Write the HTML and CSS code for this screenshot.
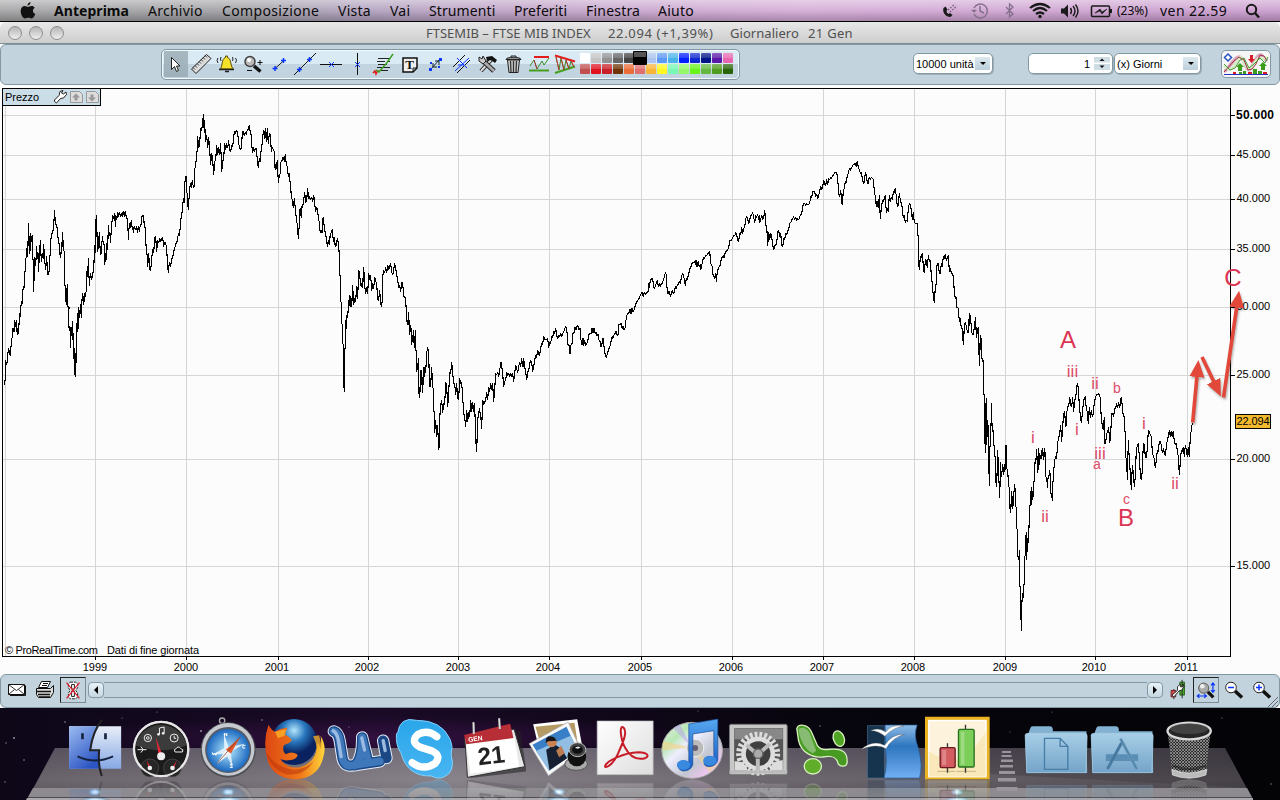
FILE: index.html
```html
<!DOCTYPE html>
<html lang="it">
<head>
  <meta charset="UTF-8">
  <title>FTSEMIB - FTSE MIB INDEX</title>
  <link rel="stylesheet" href="styles.css">
</head>
<body>
  <!-- Menu bar -->
  <div class="menubar">
    <svg class="apple" width="16" height="19" viewBox="0 0 16 19"><path d="M10.500 1c0 2-1.300 3.600-3 3.700C7.400 3 9 1.300 10.500 1zM8 6c.8 0 2-1 3.600-1 1.300 0 2.400.7 3.100 1.700-2.600 1.600-2.200 5.200.6 6.300-.7 2-2.200 4.500-3.700 4.500-1.200 0-1.800-.7-3.300-.7s-2.200.7-3.300.7C3 17.500.7 13.700.7 10.300.7 7 2.600 5.100 4.800 5.100 6.200 5.100 7.200 6 8 6z" fill="#111"/></svg>
    <nav class="menus">
      <b class="m1">Anteprima</b><span class="m2">Archivio</span><span class="m3">Composizione</span><span class="m4">Vista</span><span class="m5">Vai</span><span class="m6">Strumenti</span><span class="m7">Preferiti</span><span class="m8">Finestra</span><span class="m9">Aiuto</span>
    </nav>
    <svg class="status" width="175" height="22" viewBox="939 0 175 22" fill="none" stroke="#1a1a1a">
      <path d="M943.500 8c-1.500 4 2 9 7 9l2-2-2.500-2-1.500 1c-1.500-1-2-2-2-3l1-1.500-2-3z" fill="#1a1a1a" stroke="none"/>
      <path d="M948 10l7-6M950 12l7-6" stroke="#77677a" stroke-width="1.500" stroke-dasharray="1.500 1.500"/>
      <g stroke="#85708c" stroke-width="1.500"><path d="M974 8a7 7 0 1 1 0 6M980 6v5l4 2"/><path d="M971.500 10l2.500 2.500 2.500-2.500z" fill="#85708c" stroke-width=".5"/><path d="M1006 7l7 7-3.500 3V4l3.500 3-7 7" stroke-width="1.300"/></g>
      <path d="M1030 8q10-8 20 0M1033 11q7-6 14 0M1036 14q4-3 8 0" stroke-width="2.200"/><circle cx="1040" cy="16.500" r="1.700" fill="#1a1a1a" stroke="none"/>
      <path d="M1061 8.500h3l4-4v13l-4-4h-3z" fill="#1a1a1a" stroke="none"/><path d="M1070.500 8q2 3 0 6M1073 6q4 5 0 10M1075.500 4.500q5 6.500 0 13" stroke-width="1.400"/>
      <rect x="1091.500" y="6" width="18" height="10.500" rx="1" stroke-width="1.500"/><path d="M1111 9v4" stroke-width="2"/><path d="M1095 13l5-4 2 3 5-3-5 5-2-3z" fill="#1a1a1a" stroke-width=".6"/>
    </svg>
    <span class="battery">(23%)</span>
    <span class="clock">ven 22.59</span>
    <svg width="16" height="16" viewBox="0 0 16 16" fill="none" stroke="#1a1a1a"><circle cx="6.500" cy="6.500" r="4.700" stroke-width="2"/><path d="M10 10l4 4.500" stroke-width="2.500"/></svg>
  </div>

  <!-- Window title -->
  <div class="titlebar">
    <div class="lights"><i></i><i></i><i></i></div>
    <span class="t1">FTSEMIB – FTSE MIB INDEX</span><span class="t2">22.094 (+1,39%)</span><span class="t3">Giornaliero</span><span class="t4">21 Gen</span>
  </div>

  <!-- Drawing tools -->
  <div class="toolbar">
    <div class="tools">
      <svg class="tool active" viewBox="0 0 26 28"><path d="M9.500 7.500v12l3-3 2 5 2-1-2-4.500h3.500z" fill="#fff" stroke="#222"/></svg>
      <svg class="tool" viewBox="0 0 26 28"><path d="M3.500 19L18.500 4.500l4.500 4L8 23.500z" fill="#ddd" stroke="#222"/><path d="M5 17.500l2 2M7 15.500l2 2M9 13.500l2 2M11 11.500l2 2M13 9.500l2 2M15 7.500l2 2M17 5.500l2 2" stroke="#333"/></svg>
      <svg class="tool" viewBox="0 0 26 28"><path d="M6 19c3-2 1-10 5.500-11.500V6h2v1.500C18 9 16 17 19.500 19z" fill="#f5e02a" stroke="#5b4c06"/><path d="M5 19.500h15M11 21.500h4" stroke="#222" stroke-width="1.500"/><path d="M4 8q-2 2 0 5M7 7q-1 2 0 4M21.500 8q2 2 0 5M18.500 7q1 2 0 4" fill="none" stroke="#222"/></svg>
      <svg class="tool" viewBox="0 0 26 28"><path d="M14 16l6.500 5.500" stroke="#111" stroke-width="3.500"/><circle cx="10" cy="11.500" r="5" fill="#bbb" stroke="#444" stroke-width="1.500"/><circle cx="9" cy="10" r="2" fill="#fff"/><path d="M17.500 12.500h5M20 10v5M7 20.500h5" stroke="#111"/></svg>
      <svg class="tool" viewBox="0 0 26 28"><path d="M9 18.500l9-8" stroke="#222"/><path d="M6.500 18.500h5M9 16v5M15 10.500h5M17.500 8v5" stroke="#0a35ff" stroke-width="1.500"/></svg>
      <svg class="tool" viewBox="0 0 26 28"><path d="M2 25L24 3" stroke="#111"/><path d="M5 19.500h5M7.500 17v5M15 9.500h5M17.500 7v5" stroke="#0a35ff" stroke-width="1.500"/></svg>
      <svg class="tool" viewBox="0 0 26 28"><path d="M2 14.500h22" stroke="#111"/><path d="M11 12l5 5M16 12l-5 5" stroke="#0a35ff"/></svg>
      <svg class="tool" viewBox="0 0 26 28"><path d="M13.500 3v22" stroke="#111"/><path d="M11 12l5 5M16 12l-5 5" stroke="#0a35ff"/></svg>
      <svg class="tool" viewBox="0 0 26 28"><path d="M8 8.500h12M7 11.500h8M17 11.500h3M8 14.500h9M7 17.500h13M10 20.500h8" stroke="#222" stroke-width="1.200"/><path d="M3 23l2-2 1 3 2-4" fill="none" stroke="#e21b1b" stroke-width="1.500"/><path d="M6 20l3 2 5-6 2-2 7-10" fill="none" stroke="#3da01e" stroke-width="1.500"/></svg>
      <svg class="tool" viewBox="0 0 26 28"><path d="M7 8h14v10l-4 4H7z" fill="#eee" stroke="#111" stroke-width="1.500"/><path d="M21 18h-4v4" fill="none" stroke="#111"/><text class="tool-t" x="13.500" y="19">T</text></svg>
      <svg class="tool" viewBox="0 0 26 28"><path d="M9 19L18 9M11 13v4h4M13 11h4v4" fill="none" stroke="#123"/><path d="M7 18h3v3H7zM17 8h3v3h-3zM8 12h2v2H8zM16 16h2v2h-2z" fill="#0a35ff"/></svg>
      <svg class="tool" viewBox="0 0 26 28"><path d="M5 17L17 5M9 23L22 10" stroke="#111"/><path d="M9 8l10 10M7 21L21 8M10 15h6" stroke="#0a35ff"/></svg>
      <svg class="tool" viewBox="0 0 26 28"><path d="M7 21L18 9" stroke="#222" stroke-width="4"/><path d="M7 21L17 10" stroke="#ddd" stroke-width="2"/><path d="M8 10l12 11" stroke="#222" stroke-width="5"/><path d="M8 10l12 11" stroke="#aaa" stroke-width="3"/><path d="M5 7v4l4 3 3-3-3-5-1 3z" fill="#ccc" stroke="#222"/><path d="M12 7l6-1 5 4-2 3-4-3-4 1z" fill="#111"/></svg>
      <svg class="tool" viewBox="0 0 26 28"><path d="M7.500 10h12l-1.500 12.500H9z" fill="#ccc" stroke="#222"/><path d="M10.500 11l.5 11M13.500 11v11M16.500 11L16 22" stroke="#333" stroke-width="1.300"/><path d="M6 9.500c0-3 15-3 15 0z" fill="#999" stroke="#222"/><path d="M11 7V6h5v1" fill="none" stroke="#222"/></svg>
      <svg class="tool" viewBox="0 0 26 28"><path d="M8 7h15" stroke="#e21b1b" stroke-width="2"/><path d="M3 20.500h20" stroke="#46a01e" stroke-width="2"/><path d="M4 16l4-6 3 9 5-8 2 4 5-7" fill="none" stroke="#3d8a26"/><path d="M8 10l3 9" stroke="#a33"/></svg>
      <svg class="tool" viewBox="0 0 26 28"><path d="M3 5.500l20 6" stroke="#e21b1b" stroke-width="2"/><path d="M3 23l20-6.500" stroke="#46a01e" stroke-width="2"/><path d="M4 7l3 13 2-12 3 12 2-10 3 9 2-8 3 6" fill="none" stroke="#3d8a26"/><path d="M4 7l3 13M9 8l3 12M14 10l3 9M19 11l3 6" stroke="#b33"/></svg>
      <svg class="swatches" width="156" height="28" viewBox="0 0 156 28">
        <defs><linearGradient id="gloss" x2="0" y2="1"><stop offset="0" stop-color="#fff" stop-opacity=".3"/><stop offset="1" stop-color="#fff" stop-opacity=".15"/></linearGradient></defs>
        <rect x="2" y="3" width="10" height="10" rx="1" fill="#fff"/><rect x="13" y="3" width="10" height="10" rx="1" fill="#c4c4c4"/><rect x="24" y="3" width="10" height="10" rx="1" fill="#929292"/><rect x="35" y="3" width="10" height="10" rx="1" fill="#666"/><rect x="46" y="3" width="10" height="10" rx="1" fill="#444"/><rect x="68" y="3" width="10" height="10" rx="1" fill="#aac4ee"/><rect x="79" y="3" width="10" height="10" rx="1" fill="#5c98f4"/><rect x="90" y="3" width="10" height="10" rx="1" fill="#4ab4ea"/><rect x="101" y="3" width="10" height="10" rx="1" fill="#0020ff"/><rect x="112" y="3" width="10" height="10" rx="1" fill="#1028d0"/><rect x="123" y="3" width="10" height="10" rx="1" fill="#001488"/><rect x="134" y="3" width="10" height="10" rx="1" fill="#5a18a8"/><rect x="145" y="3" width="10" height="10" rx="1" fill="#e868b0"/>
        <rect x="2" y="14" width="10" height="10" rx="1" fill="#c05050"/><rect x="13" y="14" width="10" height="10" rx="1" fill="#e01420"/><rect x="24" y="14" width="10" height="10" rx="1" fill="#c82028"/><rect x="35" y="14" width="10" height="10" rx="1" fill="#703408"/><rect x="46" y="14" width="10" height="10" rx="1" fill="#ec6c38"/><rect x="57" y="14" width="10" height="10" rx="1" fill="#e07070"/><rect x="68" y="14" width="10" height="10" rx="1" fill="#f8b434"/><rect x="79" y="14" width="10" height="10" rx="1" fill="#fff820"/><rect x="90" y="14" width="10" height="10" rx="1" fill="#78f8b4"/><rect x="101" y="14" width="10" height="10" rx="1" fill="#94f868"/><rect x="112" y="14" width="10" height="10" rx="1" fill="#68f418"/><rect x="123" y="14" width="10" height="10" rx="1" fill="#64b840"/><rect x="134" y="14" width="10" height="10" rx="1" fill="#509c20"/><rect x="145" y="14" width="10" height="10" rx="1" fill="#286408"/>
        <rect x="13" y="3" width="142" height="5" fill="url(#gloss)"/><rect x="2" y="14" width="153" height="5" fill="url(#gloss)"/>
        <rect x="55" y="1" width="14" height="14" rx="1" fill="#000"/><rect x="56" y="2" width="12" height="5" fill="#555"/>
      </svg>
    </div>
    <div class="combo units"><span>10000 unità</span><i class="arrow"></i></div>
    <div class="combo number"><span>1</span><svg width="16" height="13" viewBox="0 0 16 13"><path d="M0 0h16v5.500H0zM0 7h16v6H0z" fill="#cfdde4"/><path d="M5.500 4h5L8 1.500zM5.500 8.500h5L8 11z" fill="#111"/></svg></div>
    <div class="combo period"><span>(x) Giorni</span><i class="arrow"></i></div>
    <div class="indicators">
      <svg width="46" height="24" viewBox="0 0 46 24" fill="none">
        <path d="M1 19c5 0 7-12 15-14 6 0 6 13 10 13s6-16 12-15l6 6" stroke="#d9a9bd" stroke-width="3.500"/>
        <path d="M1 13c5 8 9 4 13-4s5-2 9 5 6 1 10-5 6 0 11-4" stroke="#d4edc4" stroke-width="3"/>
        <path d="M1 20l10-11 5-4 5 3 4 10 4-1 4-5 4-9 4 1 3 5" stroke="#a8284a"/><path d="M1 12l6 6 5-2 5-8 4-2 5 10 5-4 6-6 5 5 3-6" stroke="#4a9a3a"/>
        <path d="M5 2l3.500 3.500L5 9 1.500 5.500z" fill="#fff" stroke="#2753c5" stroke-width="1.500"/><path d="M27 3h3v4h2l-3.500 4L25 7h2z" fill="#d81b2b"/><path d="M17 11l4 4h-2v4h-4v-4h-2zM40 10l4 4h-2v4h-4v-4h-2z" fill="#3b9d1c"/>
        <path d="M10 22v-2h3v2zM25 22v-2h4v2zM40 22v-2h4v2z" fill="#d81b2b"/><path d="M16 22v-2h3v2zM20 22v-3h3v3zM30 22v-5h4v5zM35 22v-3h4v3z" fill="#3b9d1c"/><path d="M1 22.500h44" stroke="#2430c0"/>
      </svg>
    </div>
  </div>

  <!-- Price chart -->
  <div class="chart">
    <svg class="plot" width="1280" height="589" viewBox="0 85 1280 589">
      <path class="grid" d="M5.500 89v567M95.500 89v567M186.500 89v567M278.500 89v567M368.500 89v567M458.500 89v567M549.500 89v567M641.500 89v567M732.500 89v567M823.500 89v567M914.500 89v567M1005.500 89v567M1095.500 89v567M1187.500 89v567M3 115.500h1227M3 155.500h1227M3 199.500h1227M3 249.500h1227M3 307.500h1227M3 375.500h1227M3 459.500h1227M3 566.500h1227"/>
      <path class="axis" d="M2.500 88.500h1228v568H2.500zM95.500 656v4M186.500 656v4M278.500 656v4M368.500 656v4M458.500 656v4M549.500 656v4M641.500 656v4M732.500 656v4M823.500 656v4M914.500 656v4M1005.500 656v4M1095.500 656v4M1187.500 656v4M1230 115.500h5M1230 155.500h5M1230 199.500h5M1230 249.500h5M1230 307.500h5M1230 375.500h5M1230 459.500h5M1230 566.500h5"/>

      <!-- 1998 - mid 2001 -->
      <polyline class="price" transform="translate(0 100) scale(.33333)" points="13,855 13,843 16,843 16,780 19,795 22,785 25,745 28,765 31,745 31,767 35,715 38,710 39,683 42,695 43,660 46,680 49,660 50,695 53,685 53,706 56,690 59,640 61,650 62,618 66,610 67,572 72,565 74,513 77,513 77,475 81,472 81,445 84,438 85,370 88,430 88,463 91,445 92,400 95,425 98,405 98,480 101,480 101,577 104,470 107,497 110,438 112,478 115,460 115,515 118,475 121,420 124,485 127,460 130,478 131,432 134,480 137,510 140,468 143,525 146,523 149,500 149,472 152,455 152,425 155,400 158,402 161,375 164,330 166,375 170,372 173,400 176,432 179,430 179,460 182,475 185,425 185,462 188,397 190,450 193,455 194,555 197,560 197,600 200,615 200,570 203,552 203,620 207,620 206,685 210,680 211,745 214,680 217,720 217,662 220,720 220,778 223,745 223,800 226,832 226,760 229,790 230,690 233,640 233,697 236,665 236,622 239,655 241,612 244,655 244,600 248,600 248,578 251,615 254,580 256,590 259,570 260,512 263,530 265,475 268,558 271,520 275,540 278,520 281,512 284,435 287,460 287,365 290,345 292,455 295,440 298,397 301,463 304,460 307,408 310,430 314,438 314,496 317,458 320,480 320,430 323,450 325,376 328,408 331,400 331,430 335,375 338,345 341,358 343,340 347,382 347,345 350,360 353,335 356,352 358,335 361,350 364,338 367,350 370,332 373,350 376,332 379,355 383,355 385,420 388,370 391,385 394,360 397,390 400,380 400,400 403,378 406,390 410,378 412,398 415,378 418,395 421,375 424,375 424,355 428,345 431,350 433,382 436,382 437,420 440,462 443,465 443,502 446,460 449,507 452,512 455,478 458,448 461,460 464,412 467,410 470,455 473,420 476,430 479,415 482,424 488,412 491,440 494,425 497,432 500,440 502,488 505,518 508,485 511,502 514,485 517,470 520,465 523,445 526,440 529,425 532,425 535,400 538,408 541,378 544,345 547,335 550,295 553,308 553,275 556,230 559,228 559,275 562,280 562,300 565,330 568,280 571,250 574,265 577,240 580,262 583,258 584,205 587,200 590,155 593,155 593,108 596,145 599,130 602,85 605,92 608,62 611,42 611,85 614,60 614,100 617,88 617,125 620,105 623,145 626,110 629,150 632,195 635,158 638,180 641,225 644,185 647,180 650,135 653,165 656,140 659,165 662,128 665,215 668,185 671,175 674,130 677,150 680,130 683,145 686,120 688,148 692,155 695,135 698,140 701,110 704,92 707,100 710,90 713,98 716,130 720,148 724,145 727,100 730,92 733,108 736,95 739,105 742,88 745,90 748,75 751,100 754,105 757,160 760,142 763,155 766,145 769,145 772,180 775,205 778,175 781,185 784,140 787,130 790,90 793,95 793,118 796,85 799,125 802,85 805,132 808,100 811,105 814,155 817,140 820,150 823,155 823,185 826,210 829,185 832,215 832,180 835,250 838,225 841,220 841,190 844,185 847,180 850,170 853,185 856,162 859,195 862,200 865,230 868,220 868,242 871,245 874,290 877,300 880,325 883,295 886,325 889,355 892,375 895,418 898,370 898,330 901,325 904,355 904,320 908,322 911,300 914,275 917,308 920,300 923,265 926,298 929,290 932,300 935,290 938,305 941,285 944,310 947,335 950,320 955,348 958,370 961,400 964,390 967,400 967,370 970,350 973,385 976,400 979,415 982,440 985,420 988,430"/>
      <!-- mid 2001 - 2004 -->
      <polyline class="price" transform="translate(320 220) scale(.33333)" points="22,82 25,62 28,75 31,40 34,38 37,28 40,65 43,50 46,82 49,75 52,55 55,68 58,105 58,165 61,168 62,245 65,250 65,310 68,315 68,370 71,375 71,485 73,515 73,385 76,385 77,300 80,328 80,285 83,295 86,240 86,270 89,225 92,262 92,228 95,262 98,195 101,255 104,235 107,245 110,197 113,238 116,150 119,165 122,195 125,200 128,175 128,205 131,140 134,195 137,222 140,200 143,222 146,160 149,180 152,165 155,212 158,190 161,208 164,170 167,185 170,190 173,240 176,240 179,210 182,250 185,260 188,225 188,170 191,150 194,160 197,140 200,160 203,135 206,150 209,140 212,130 215,155 218,165 221,150 224,130 227,145 230,165 233,178 236,205 239,195 242,217 245,185 248,190 251,228 257,235 260,300 263,315 266,275 266,315 269,300 269,345 272,315 275,345 275,375 278,345 281,370 281,330 284,385 287,330 287,390 290,395 290,455 293,440 296,415 296,515 299,535 302,450 302,515 305,450 308,520 311,440 311,485 314,440 317,460 320,400 323,380 326,405 329,500 332,498 335,440 338,500 341,510 341,575 344,575 344,640 347,600 350,650 353,615 356,690 359,670 359,600 362,550 365,555 365,540 368,580 371,550 374,555 377,485 380,495 383,560 386,520 389,455 392,460 395,425 398,460 401,490 404,490 407,525 410,490 413,535 416,540 419,475 422,490 425,488 428,530 431,580 434,590 437,622 440,570 443,605 446,575 449,590 452,540 455,575 458,545 461,575 464,550 467,655 470,697 473,600 476,580 479,565 482,600 482,580 485,628 488,540 491,555 497,540 500,515 503,540 506,500 509,515 512,490 515,510 518,490 521,545 524,510 527,460 530,465 533,455 536,472 539,450 543,427 546,445 548,460 551,500 554,485 557,480 560,455 563,468 566,458 569,472 572,458 575,472 578,460 581,485 584,460 587,435 590,445 593,458 596,440 599,425 602,440 605,415 608,440 611,440 611,415 614,440 617,455 620,480 623,455 626,455 629,430 632,422 635,428 638,455 641,440 647,405 650,412 653,390 656,405 659,405 662,385 665,370 668,375 671,347 674,358 680,358 683,355 686,384 689,365 692,370 695,350 698,352 701,335 704,340 707,325 710,345 713,357 716,345 719,350 722,340 725,352 728,340 731,338 734,325 738,320 741,338 744,375 747,375 750,402 753,375 756,372 759,340 762,338 765,320 768,330 771,318 774,318 777,330 780,325 783,360 786,375 789,355 791,378 794,360 797,378 800,370 803,365 806,345 810,340 813,342 816,325 819,338 822,325 825,340 828,338 831,348 834,342 837,360 840,365 843,382 846,370 849,355 852,380 855,400 858,412 861,405 864,395 867,385 870,378 873,365 876,350 879,355 882,345 888,335 891,345 894,345 897,312 900,315 903,310 906,325 909,318 912,330 915,325 918,300 921,285 924,280 927,278 930,268 933,282 936,265 939,275 942,270 945,260 948,250 951,245 954,240 957,235 960,228 963,222 966,218 970,232 973,215 976,225 979,218 985,215 988,190"/>
      <!-- 2005 - 2008 -->
      <polyline class="price" transform="translate(640 140) scale(.33333)" points="27,445 27,430 30,428 33,418 37,415 40,430 43,448 46,438 49,430 52,420 55,440 58,430 61,442 64,430 67,430 70,420 73,412 76,398 79,405 82,460 85,462 88,452 91,470 94,460 97,450 100,462 103,455 106,440 109,445 112,435 115,432 118,425 121,432 124,412 127,402 130,402 133,420 136,437 139,415 142,420 145,405 148,395 151,382 154,378 157,368 163,368 166,360 169,380 169,360 172,380 175,362 178,382 181,372 182,390 185,378 188,362 191,352 194,355 197,345 200,348 203,340 206,340 209,332 212,370 215,375 218,382 218,405 221,405 224,418 227,400 229,425 232,395 235,385 238,378 241,375 244,355 247,352 250,345 253,355 256,335 259,335 262,330 266,325 269,300 272,302 278,295 281,285 284,288 287,278 290,285 293,300 296,305 299,280 302,285 305,262 308,282 311,265 314,262 317,235 320,230 323,235 326,252 329,240 332,225 335,225 338,218 341,230 344,250 347,225 350,232 353,222 356,240 359,225 359,250 362,238 365,225 368,238 371,235 374,210 377,245 380,280 383,275 383,318 386,275 389,300 392,280 395,290 398,315 401,330 404,318 410,312 413,275 416,272 419,290 422,278 425,315 428,322 431,295 434,298 437,280 440,285 443,272 446,270 449,250 452,248 455,240 461,230 464,240 467,232 470,242 473,235 476,240 479,230 482,222 485,222 488,200 491,190 494,190 497,198 500,190 503,195 509,190 512,170 515,172 518,155 524,155 527,170 530,162 533,178 536,165 539,155 542,138 545,150 548,142 551,120 554,132 557,138 560,118 563,135 566,115 569,120 572,112 575,115 578,105 581,105 584,98 590,98 593,115 596,160 599,170 602,150 605,185 607,195 610,150 613,145 616,125 619,130 622,105 625,100 628,85 631,92 634,82 637,80 640,72 643,75 646,68 649,82 652,62 655,85 658,88 661,100 664,95 667,115 670,130 673,128 676,98 679,105 682,130 685,130 688,110 691,118 694,112 700,118 703,155 706,170 709,200 709,185 712,185 715,205 718,165 721,238 724,205 727,182 730,185 733,175 736,165 739,220 742,205 745,215 748,165 751,185 754,170 757,180 760,155 763,158 766,145 769,170 772,200 775,195 778,160 781,180 784,190 787,205 790,235 793,225 796,250 799,240 802,245 805,205 808,190 811,195 814,210 817,240 820,215 823,248 829,252 832,248 832,280 835,290 835,360 838,390 841,350 844,355 847,338 850,380 853,400 856,360 859,360 862,385 865,345 868,365 871,360 874,410 877,430 880,470 883,488 886,440 889,430 889,385 892,372 895,370 898,400 901,400 904,370 907,380 910,350 913,355 916,342 919,362 922,355 925,345 928,395 931,385 934,400 937,400 940,410 943,455 946,475 949,472 949,502 952,502 955,505 958,545 961,535 964,565 967,565 970,615 973,560 976,545 979,560 982,575 985,580 988,520"/>
      <!-- crash and rebound -->
      <polyline class="price" transform="translate(900 260) scale(.33333)" points="206,215 209,158 212,178 215,215 218,225 221,220 224,190 227,170 229,235 232,205 235,230 235,200 238,318 241,225 241,270 244,235 244,285 248,305 250,300 251,405 254,405 254,535 257,578 257,440 260,415 260,555 263,480 266,530 266,620 269,677 269,560 272,560 272,530 275,430 275,490 278,490 281,555 284,560 284,590 287,590 287,660 290,682 293,570 296,640 299,715 302,605 302,655 305,645 308,612 311,645 314,612 317,630 317,555 320,558 320,625 323,630 326,680 329,685 329,740 332,760 335,692 338,748 341,720 341,705 344,672 347,710 347,740 350,745 350,805 353,810 353,885 356,900 359,870 359,980 362,980 362,1060 365,1112 365,1035 368,1000 370,1015 371,975 374,970 374,890 377,885 377,825 380,900 380,815 383,875 386,795 389,805 389,738 392,735 392,692 395,735 395,680 398,720 401,690 401,665 404,665 404,605 407,612 410,568 413,638 416,565 416,630 419,580 422,598 425,570 425,598 428,565 431,600 434,565 437,600 437,650 440,655 443,685 443,655 446,655 449,630 452,660 452,695 455,710 458,723 458,665 461,665 461,635 464,600 467,590 470,595 473,545 476,540 479,510 482,515 482,495 485,545 488,500 491,460 494,455 497,500 500,495 500,460 503,440 506,440 509,410 512,435 515,440 518,412 521,455 524,420 527,415 530,380 533,370 536,400 538,440 541,465 544,490 547,460 550,430 553,412 556,410 559,450 562,455 565,493 568,440 571,475 574,450 577,470 580,460 583,425 586,415 589,405 592,405 595,402 598,402 601,415 604,480 607,495 610,510 613,470 613,550 617,550 620,520 623,518 626,500 629,550 632,525 635,460 638,460 641,470 644,445 647,445 650,430 653,445 656,425 659,445 662,420 664,412 667,440 670,470 673,470 674,515 677,515 677,590 680,600 682,660 685,540 688,600 691,640 694,690 697,615 700,640 703,680 706,650 709,565 712,560 715,550 718,590 721,645 724,660 727,630 730,550 733,555 736,590 739,595 742,565 745,510 748,515 751,525 754,530 757,575 760,590 763,595 766,625 769,600 772,570 775,575 778,545 781,545 784,555 787,580 790,565 793,580 796,588 799,560 802,540 805,530 808,510 811,530 814,512 817,532 820,512 823,545 826,555 829,548 832,575 835,590 838,645 841,605 844,570 847,575 850,560 853,590 856,555 859,570 862,590 865,560 868,592 871,530 874,510 877,488"/>

      <g class="label">
        <text class="strong" x="1236" y="119" textLength="38">50.000</text><text x="1236.500" y="158">45.000</text><text x="1236.500" y="202">40.000</text><text x="1236.500" y="252">35.000</text><text x="1236.500" y="310">30.000</text><text x="1236.500" y="378">25.000</text><text x="1236.500" y="462">20.000</text><text x="1236.500" y="569">15.000</text>
      </g>
      <rect x="1235.500" y="414.500" width="35" height="14" fill="#f3b92f" stroke="#000"/>
      <text class="label" x="1236.500" y="425" textLength="33">22.094</text>
      <g class="label years">
        <text x="95" y="671">1999</text><text x="186" y="671">2000</text><text x="277" y="671">2001</text><text x="367" y="671">2002</text><text x="458" y="671">2003</text><text x="548" y="671">2004</text><text x="640" y="671">2005</text><text x="731" y="671">2006</text><text x="822" y="671">2007</text><text x="913" y="671">2008</text><text x="1005" y="671">2009</text><text x="1094" y="671">2010</text><text x="1186" y="671">2011</text>
      </g>
      <text class="label" x="5" y="654" textLength="93">© ProRealTime.com</text><text class="label" x="107" y="654" textLength="92">Dati di fine giornata</text>

      <!-- Elliott wave labels -->
      <g class="wave">
        <text class="big" x="1068" y="348">A</text><text class="big" x="1126" y="526">B</text><text class="big" x="1233" y="286">C</text>
        <text x="1072.500" y="377">iii</text><text x="1095" y="389">ii</text><text x="1033" y="443">i</text><text x="1077" y="434.500">i</text><text x="1100" y="458.500">iii</text><text x="1045" y="522">ii</text><text x="1175" y="489">ii</text><text x="1144" y="429">i</text>
        <text class="small" x="1117" y="393">b</text><text class="small" x="1097" y="469">a</text><text class="small" x="1126.500" y="504">c</text>
      </g>
      <defs><marker id="head" markerUnits="userSpaceOnUse" markerWidth="17" markerHeight="16" refX="1" refY="8" orient="auto"><path d="M0 .5l17 7.500L0 15.500z" fill="#e2483a"/></marker></defs>
      <g class="arrows"><path d="M1192.700 422.500L1197 376" marker-end="url(#head)"/><path d="M1202 357l12 25" marker-end="url(#head)"/><path d="M1223.500 397.500L1236.800 306.500" marker-end="url(#head)"/></g>
    </svg>
    <div class="pricetab">
      <span>Prezzo</span>
      <svg width="46" height="16" viewBox="0 0 46 16"><path d="M1.500 12.500l2 1.500 4-4.500 3-.5 3-3.500-.5-2.500-2.500 2-2-1L10 1.500 7 2.500 6 6.500 1.500 11z" fill="#fff" stroke="#222"/><path d="M17.500 2.500h9l3 3v8h-12zM33.500 2.500h9l3 3v8h-12z" fill="#ddd" stroke="#999"/><path d="M23 4.500l4 4h-2.500v3h-3v-3H19zM39 12.500l4-4h-2.500v-3h-3v3H35z" fill="#999"/></svg>
    </div>
  </div>

  <!-- Scroll and zoom bar -->
  <div class="bottombar">
    <svg class="ic" viewBox="0 0 26 26"><path d="M4.500 7.500h16v10h-16z" fill="#fff" stroke="#111"/><path d="M4.500 7.500l8 6 8-6M4.500 17.500l6-5M20.500 17.500l-6-5" fill="none" stroke="#333"/><path d="M6 18.500h15.500v-10" fill="none" stroke="#111"/></svg>
    <svg class="ic printer" viewBox="0 0 26 26"><path d="M9.500 4.500h9l-3 6h-9z" fill="#fff" stroke="#111"/><path d="M11 6.500h5M10 8.500h5" stroke="#111"/><path d="M4.500 11.500h14l3-3v7l-3 5h-12l-2-3z" fill="#ddd" stroke="#111"/><path d="M4 14.500h15M6 17.500h12M7 20h11" stroke="#111" stroke-width="1.500"/></svg>
    <svg class="ic boxed" viewBox="0 0 26 26"><path d="M10 4.500h6l2 2v4l-2 3 2 3v4l-2 2h-6l-2-2v-4l2-3-2-3v-4z" fill="#fff" stroke="#111" stroke-dasharray="3 1"/><path d="M11.500 7h3v5h-3zM11.500 14h3v6h-3z" fill="none" stroke="#111"/><path d="M6 5l14 17M20 5L6 22" stroke="#e01b2b" stroke-width="1.300"/></svg>
    <div class="scroll"><button class="left"></button><div class="track"></div><button class="right"></button></div>
    <svg class="ic wrench" viewBox="0 0 26 26"><path d="M15 4.500h5v14h-5z" fill="#4cae2f" stroke="#265c17"/><path d="M17.500 2v20M8.500 12v11" stroke="#222"/><path d="M5.500 13.500h5v7h-5z" fill="#d24848" stroke="#622"/><path d="M6.500 18.500l6-5v-4l3-3v3h3v-3l1 3-3 4h-2l-6 7z" fill="#fff" stroke="#222"/></svg>
    <svg class="ic boxed zoomfit" viewBox="0 0 26 26"><path d="M15 15l6 6" stroke="#111" stroke-width="3.500"/><circle cx="10.500" cy="11" r="5.500" fill="#aaa" stroke="#555"/><circle cx="9" cy="9" r="2.500" fill="#eee"/><path d="M20.500 6v9M18.500 8l2-2.500 2 2.500M18.500 13l2 2.500 2-2.500M4 19.500h9M6 17.500l-2.500 2 2.500 2M11 17.500l2.500 2-2.500 2" fill="none" stroke="#0a35ff" stroke-width="1.300"/></svg>
    <svg class="ic" viewBox="0 0 26 26"><path d="M14 14l7 6.500" stroke="#111" stroke-width="3.500"/><circle cx="10" cy="10.500" r="5.300" fill="#fff" stroke="#222"/><path d="M7 10.500h6" stroke="#0a35ff" stroke-width="1.500"/></svg>
    <svg class="ic last" viewBox="0 0 26 26"><path d="M14 14l7 6.500" stroke="#111" stroke-width="3.500"/><circle cx="10" cy="10.500" r="5.300" fill="#fff" stroke="#222"/><path d="M7 10.500h6M10 7.500v6" stroke="#0a35ff" stroke-width="1.500"/></svg>
    <svg class="grip" width="10" height="10" viewBox="0 0 10 10"><path d="M0 10L10 0M4 10l6-6M8 10l2-2" stroke="#667"/></svg>
  </div>

  <!-- Dock -->
  <div class="dock">
    <svg class="shelf" width="1280" height="92" viewBox="0 0 1280 92">
      <defs>
        <linearGradient id="shelf" x2="0" y2="1"><stop offset="0" stop-color="#625b69"/><stop offset=".6" stop-color="#777079"/><stop offset="1" stop-color="#655f67"/></linearGradient>
        <linearGradient id="shade"><stop offset="0" stop-color="#000" stop-opacity=".12"/><stop offset=".35" stop-color="#fff" stop-opacity=".13"/><stop offset=".65" stop-color="#000" stop-opacity=".1"/><stop offset="1" stop-color="#000" stop-opacity=".32"/></linearGradient>
        <radialGradient id="lamp"><stop offset="0" stop-color="#fff"/><stop offset=".4" stop-color="#c4e8ff"/><stop offset="1" stop-color="#7ab8e8" stop-opacity="0"/></radialGradient>
      </defs>
      <g fill="#958ba8"><circle cx="14" cy="30" r="1"/><circle cx="6" cy="35" r=".7"/><circle cx="24" cy="52" r=".8"/><circle cx="65" cy="14" r=".8"/><circle cx="122" cy="10" r=".6"/><circle cx="157" cy="4" r=".6"/><circle cx="201" cy="23" r="1"/><circle cx="262" cy="12" r=".8"/><circle cx="349" cy="19" r=".6"/><circle cx="503" cy="26" r=".7"/><circle cx="698" cy="3" r=".5"/><circle cx="820" cy="18" r=".7"/><circle cx="1010" cy="24" r=".5"/><circle cx="1052" cy="4" r=".5"/><circle cx="1222" cy="10" r=".6"/><circle cx="1271" cy="76" r=".7"/><circle cx="5" cy="74" r=".7"/></g>
      <path d="M55 40h1170l28 52H27z" fill="url(#shelf)"/><path d="M55 40h1170l28 52H27z" fill="url(#shade)"/>
      <path d="M990 40h235l26 40-261-14z" fill="#000" opacity=".12"/>
      <path d="M33 80h1214l5 9H28z" fill="#8d8b8f"/><path d="M28 89.500h1224" stroke="#4f4b52"/><path d="M27 90h1226v2H26z" fill="#aaa8ac"/>
      <g fill="#99949d"><path d="M1002 43h9v2h-9zM1001.500 47h10v2h-10zM1001 51.500h12v2.500h-12zM1000 57h13v2.500h-13zM999 63h16v3h-16zM998 70h18v3.500h-18zM996.500 79h21v4h-21z"/></g>
      <g fill="url(#lamp)"><ellipse cx="95" cy="84" rx="7" ry="4"/><ellipse cx="228" cy="84" rx="7" ry="4"/><ellipse cx="559" cy="84" rx="7" ry="4"/><ellipse cx="957" cy="84" rx="7" ry="4"/><ellipse cx="95" cy="92" rx="14" ry="3"/><ellipse cx="228" cy="92" rx="14" ry="3"/><ellipse cx="559" cy="92" rx="14" ry="3"/><ellipse cx="957" cy="92" rx="14" ry="3"/></g>
    </svg>
    <div class="apps">
      <!-- Finder -->
      <svg viewBox="0 0 198 213">
        <defs><linearGradient id="fl" x2=".6" y2="1"><stop offset="0" stop-color="#9cbcf0"/><stop offset="1" stop-color="#2c55c4"/></linearGradient><linearGradient id="fr" x2="0" y2="1"><stop offset="0" stop-color="#e8eef8"/><stop offset="1" stop-color="#86a8e4"/></linearGradient></defs>
        <path d="M21 55h156v127H21z" fill="url(#fr)"/><path d="M21 55h90q-20 30-25 71h28q-4 30 0 56H21z" fill="url(#fl)"/>
        <path d="M120 35Q92 68 84 127h27q-4 45 8 77" fill="none" stroke="#222" stroke-width="6"/><path d="M46 145q52 25 107 0" fill="none" stroke="#16233f" stroke-width="6"/><path d="M61 76v18M130 76v18" stroke="#16233f" stroke-width="8"/>
      </svg>
      <!-- Dashboard -->
      <svg viewBox="0 0 198 213">
        <circle cx="99" cy="123" r="85" fill="#e6e6e6"/><circle cx="99" cy="123" r="79" fill="#1a1a1a"/><path d="M22 112a79 79 0 0 1 154 0q-77 30-154 0z" fill="#3b3b3b"/>
        <circle cx="65" cy="180" r="27" fill="#262626" stroke="#555" stroke-width="2"/><circle cx="133" cy="180" r="27" fill="#262626" stroke="#555" stroke-width="2"/><circle cx="99" cy="123" r="81" fill="none" stroke="#e6e6e6" stroke-width="6"/>
        <g fill="none" stroke="#eee" stroke-width="3"><circle cx="59" cy="90" r="11"/><circle cx="59" cy="90" r="4"/><circle cx="138" cy="90" r="12"/><path d="M138 83v8h6M94 78V60l14-3v18M28 125h27M38 116l7 9-7 9M141 132h22q5-8-5-10-8-10-14 0-10 2-3 10z"/></g><circle cx="91" cy="79" r="4" fill="#eee"/><circle cx="105" cy="76" r="4" fill="#eee"/>
        <path d="M83 88l20 54-11 2zM56 157l13 24-7 2zM146 157l-9 27-6-3z" fill="#e32636"/><circle cx="99" cy="145" r="12" fill="#eee"/><circle cx="65" cy="180" r="7" fill="#eee"/><circle cx="133" cy="180" r="7" fill="#eee"/>
      </svg>
      <!-- Safari -->
      <svg viewBox="0 0 198 213">
        <defs><radialGradient id="sa"><stop offset="0" stop-color="#b8ecff"/><stop offset="1" stop-color="#1c69c0"/></radialGradient></defs>
        <circle cx="81" cy="38" r="8" fill="none" stroke="#aaa" stroke-width="4"/><path d="M77 45h9v8h-9z" fill="#888"/><circle cx="99" cy="126" r="83" fill="#4d4f55"/><circle cx="99" cy="124" r="79" fill="#c6c9ce"/><circle cx="99" cy="126" r="69" fill="#555b66"/><circle cx="99" cy="127" r="64" fill="url(#sa)"/>
        <path d="M86 74l14 43 49-10-42 24 5 46-20-40-41 3 36-19z" fill="#e9f6ff" opacity=".85"/><path d="M136 86l-29 51-15-12z" fill="#e45a2b"/><path d="M65 167l27-42 15 12z" fill="#f2f2f2"/><path d="M136 86l-71 81" stroke="#6c3b2c" stroke-width="2"/><g fill="none" stroke="#fff" stroke-width="3"><path d="M88 84v-9l7 9v-9M151 112h-8v8h7M51 133l3 8 4-6 4 7 3-8M113 169h-8l7 9h-8"/></g>
      </svg>
      <!-- Firefox -->
      <svg viewBox="0 0 198 213">
        <defs><radialGradient id="ff" cx=".5" cy=".25"><stop offset="0" stop-color="#b3e6fb"/><stop offset=".5" stop-color="#2876bd"/><stop offset="1" stop-color="#0a2260"/></radialGradient><linearGradient id="fox" x2="1"><stop offset="0" stop-color="#dd4813"/><stop offset=".6" stop-color="#f07a1a"/><stop offset="1" stop-color="#ffd43a"/></linearGradient></defs>
        <circle cx="99" cy="102" r="69" fill="url(#ff)"/>
        <path d="M22 50q8 16 20 21 14-10 37-12-6 11-7 22 16 6 20 17-8 9-24 14-6 16 6 27 16-12 36 1-4 14-22 16-16 4-30-3 20 32 60 24 50-14 52-74l8 18q4-18 0-38 20 30 8 66-14 60-82 65-62-2-82-48-20-60 0-116z" fill="url(#fox)"/>
        <path d="M42 71l33-8-5 20-20 8zM156 85q20 38 0 76l26-45-8-34z" fill="#ffb62a" opacity=".75"/><path d="M14 130q10 50 58 68 55 10 86-39-38 36-82 22-42-14-62-51z" fill="#b8320a" opacity=".5"/>
      </svg>
      <!-- Word -->
      <svg viewBox="0 0 198 213">
        <g fill="none" stroke-linecap="round" stroke-linejoin="round">
          <path id="word" d="M20 70Q34 74 38 100L46 150Q52 178 78 172L158 160M84 172Q106 150 105 88L120 150 122 165M168 98L178 150" stroke="#e4eefa" stroke-width="37"/>
          <path d="M20 70Q34 74 38 100L46 150Q52 178 78 172L158 160M84 172Q106 150 105 88L120 150 122 165M168 98L178 150" stroke="#1b4785" stroke-width="31"/>
          <path d="M20 70Q34 74 38 100L46 150Q52 178 78 172L158 160M84 172Q106 150 105 88L120 150 122 165" stroke="#3f78ba" stroke-width="23"/>
          <path d="M18 68Q30 74 34 98L42 146M104 90l8 36M168 98l6 30" stroke="#9cbbe2" stroke-width="10"/>
        </g>
      </svg>
      <!-- Skype -->
      <svg viewBox="0 0 198 213">
        <defs><linearGradient id="sk" x2="0" y2="1"><stop offset="0" stop-color="#29a6ea"/><stop offset="1" stop-color="#49b5f2"/></linearGradient></defs>
        <path d="M13 77Q20 24 70 37q75-1 101 57 10 21 3 45 14 54-22 68-16 8-38-3-72 2-91-70-16-22-13-57z" fill="url(#sk)" stroke="#85d1fa" stroke-width="3"/><path d="M131 86q-27-22-56-7-25 22 5 38l37 12q30 14 8 38-33 22-68-3" fill="none" stroke="#fff" stroke-width="22" stroke-linecap="round"/>
      </svg>
      <!-- iCal -->
      <svg viewBox="0 0 198 213">
        <path d="M20 92l11 118 168-20-18-122z" fill="#222" opacity=".55"/><path d="M14 90l148-26 32 112-150 28-22 4z" fill="#e8e8e8" stroke="#333" stroke-width="3"/><path d="M16 90l133-22 14 20 14 88-146 22z" fill="#fff"/><path d="M12 81l138-34 10 43-142 19z" fill="#b72e37"/><path d="M41 78l-1-35M119 63l-2-32" stroke="#999" stroke-width="7"/><path d="M41 78l-1-35M119 63l-2-32" stroke="#ddd" stroke-width="4"/>
        <text class="gen" x="25" y="102" transform="rotate(-7 25 102)">GEN</text><text class="day" x="56" y="172" transform="rotate(-7 56 172)">21</text>
      </svg>
      <!-- Preview -->
      <svg viewBox="0 0 198 213">
        <path d="M21 49l132-15 15 79-127 20z" fill="#fff"/><path d="M28 56l117-12 10 64-107 16z" fill="#b59a64"/><path d="M9 107L126 42l40 88-99 73z" fill="#f8f8f8" stroke="#aaa" stroke-width="2"/><path d="M19 110l102-54 33 70-85 62z" fill="#397fc8"/><path d="M29 129l104-46 21 42-85 63z" fill="#91bee2"/><path d="M60 126l25-17 21 13 17 29-53 36z" fill="#172033"/><circle cx="77" cy="103" r="15" fill="#c88253"/><path d="M59 105q-2-29 25-17l8 10-26 2z" fill="#18151a"/><path d="M90 128l15-15 11 22-17 13z" fill="#bd7b50"/><ellipse cx="150" cy="168" rx="34" ry="19" fill="#aaa" stroke="#555" stroke-width="3"/><ellipse cx="152" cy="146" rx="28" ry="29" fill="#111"/><ellipse cx="154" cy="125" rx="25" ry="21" fill="#444" stroke="#bbb" stroke-width="3"/><ellipse cx="154" cy="125" rx="16" ry="12" fill="#0d0f10"/><path d="M146 120q8-8 17-2l-7 4z" fill="#eee"/>
      </svg>
      <!-- Acrobat -->
      <svg viewBox="0 0 198 213">
        <defs><linearGradient id="ac" y2="1"><stop offset="0" stop-color="#fff"/><stop offset="1" stop-color="#ddd"/></linearGradient></defs>
        <path d="M15 39h168v161H15z" fill="url(#ac)" stroke="#b8b8b8" stroke-width="2"/><path d="M95 60c-15-15-10 35 4 59 15 28 33 36 54 33 19-4 20-18-15-19-42 1-95 26-99 41-2 8 20 3 39-38 15-34 28-63 17-76z" fill="none" stroke="#c71c27" stroke-width="6"/>
      </svg>
      <!-- iTunes -->
      <svg viewBox="0 0 198 213">
        <defs><linearGradient id="cd" x2="1" y2="1"><stop offset="0" stop-color="#eee"/><stop offset=".25" stop-color="#b9e8b5"/><stop offset=".4" stop-color="#eef"/><stop offset=".65" stop-color="#c2c7d0"/><stop offset=".8" stop-color="#eac5ec"/><stop offset="1" stop-color="#ddd"/></linearGradient><linearGradient id="note" x2="0" y2="1"><stop offset="0" stop-color="#56a7ef"/><stop offset="1" stop-color="#145ac3"/></linearGradient></defs>
        <ellipse cx="99" cy="127" rx="91" ry="84" fill="url(#cd)" stroke="#aaa" stroke-width="3"/><path d="M98 119L12 99l-2 28zM103 131l71 40-23 21z" fill="#f5d28a" opacity=".6"/><path d="M98 119L42 60l20-11z" fill="#b5a0ed" opacity=".5"/><circle cx="108" cy="120" r="26" fill="#bbb" stroke="#eee" stroke-width="3"/><circle cx="108" cy="120" r="9" fill="#685f70"/>
        <path d="M89 48l87-15v122q-4 20-28 21-20-3-10-20 12-10 26-5V68l-63 10v91q-5 20-29 20-21-5-10-23 11-9 27-4z" fill="url(#note)" stroke="#164894" stroke-width="2"/><ellipse cx="73" cy="171" rx="20" ry="15" fill="#3989df"/><ellipse cx="152" cy="158" rx="20" ry="15" fill="#3989df"/>
      </svg>
      <!-- System preferences -->
      <svg viewBox="0 0 198 213">
        <rect x="13" y="49" width="173" height="151" rx="5" fill="#c7c7c7" stroke="#777" stroke-width="3"/><path d="M27 61h147v126H27z" fill="#555"/><path d="M28 62h145v32H28z" fill="#888"/><circle cx="99" cy="137" r="56" fill="none" stroke="#ddd" stroke-width="20" stroke-dasharray="8 6"/><circle cx="99" cy="137" r="51" fill="#ddd"/><circle cx="99" cy="137" r="37" fill="#3f3f3f"/><path d="M98 140L64 111M98 140l36-32M98 140v47" stroke="#bbb" stroke-width="12"/><circle cx="99" cy="137" r="14" fill="#aaa" stroke="#666" stroke-width="4"/><path d="M28 160q30-4 40 27H28zM173 157q-34 0-40 30h40z" fill="#ddd"/><path d="M13 192h173" stroke="#bbb" stroke-width="9"/>
      </svg>
      <!-- Excel -->
      <svg viewBox="0 0 198 213">
        <path d="M17 62c4-16 34-14 44 10l18 41q10 15 34 11c50-5 56 16 55 40-4 18-27 9-28 0-6-20-22-22-46-17-29 3-64-13-72-50z" fill="#489b22" stroke="#d7efbd" stroke-width="4"/><path d="M22 65c6-11 28-7 35 14l18 49-10 8Q31 119 22 65z" fill="#88bc72"/><ellipse cx="143" cy="92" rx="16" ry="24" transform="rotate(-20 143 92)" fill="#4fa523" stroke="#d7efbd" stroke-width="4"/><ellipse cx="65" cy="175" rx="26" ry="23" fill="#5fad29" stroke="#d7efbd" stroke-width="4"/>
      </svg>
      <!-- OpenOffice -->
      <svg viewBox="0 0 198 213">
        <defs><linearGradient id="oo" x2="0" y2="1"><stop offset="0" stop-color="#8fbbe5"/><stop offset=".4" stop-color="#2d76bf"/><stop offset="1" stop-color="#73aef2"/></linearGradient></defs>
        <path d="M28 53h51v157H28z" fill="#17344f" stroke="#496e90" stroke-width="2"/><path d="M81 51h96q-12 34 4 70 14 54 3 89H78q11-42 3-92z" fill="url(#oo)" stroke="#205894" stroke-width="2"/><path d="M37 68q24-11 46 4 15-24 54-18-34 5-57 31-18-17-43-17zM8 125q36-32 71-13 23-35 60-33-37 10-55 43-29-17-76 3z" fill="#fff" stroke="#444" stroke-width="1"/>
      </svg>
      <!-- ProRealTime -->
      <svg viewBox="0 0 198 213">
        <path d="M7 31h185v181H7z" fill="#f9efcf" stroke="#eab320" stroke-width="9"/><path d="M14 38h171v168H14z" fill="#fdf3dd" stroke="#fff" stroke-width="4"/><path d="M14 130q100 70 171-60v136H14z" fill="#f4dc8e" opacity=".45"/>
        <path d="M70 106v88M124 50v144" stroke="#333" stroke-width="4"/><rect x="48" y="119" width="45" height="60" rx="4" fill="#d35c60" stroke="#681b20" stroke-width="4"/><rect x="103" y="64" width="47" height="113" rx="4" fill="#7bcf59" stroke="#286e20" stroke-width="4"/><path d="M54 126h12v45H54zM110 71h11v99h-11z" fill="#fff" opacity=".25"/><path d="M40 190h53M96 190h60" stroke="#8a6a3b" stroke-width="3" opacity=".4"/>
      </svg>
    </div>
    <div class="places">
      <!-- Documents -->
      <svg viewBox="0 0 198 213">
        <defs><linearGradient id="fo" x2="0" y2="1"><stop offset="0" stop-color="#a7cee7"/><stop offset="1" stop-color="#74a4c9"/></linearGradient></defs>
        <path d="M14 81l8-22q2-4 8-4h51q7 0 8 8v7h101l2 125H10L6 83z" fill="#83b2d2"/><path d="M6 82q0-6 9-6h168q9 0 9 8l-4 110H11z" fill="url(#fo)" stroke="#a8cee3" stroke-width="2"/><path d="M64 91h47l23 24v69H64zM111 91v24h23" fill="none" stroke="#477da6" stroke-width="4"/>
      </svg>
      <!-- Applications -->
      <svg viewBox="0 0 198 213">
        <path d="M14 81l8-22q2-4 8-4h51q7 0 8 8v7h101l2 125H10L6 83z" fill="#83b2d2"/><path d="M6 82q0-6 9-6h168q9 0 9 8l-4 110H11z" fill="url(#fo)" stroke="#a8cee3" stroke-width="2"/><path d="M50 139h97v20H50z" fill="#5b8eb4"/><path d="M97 105l-42 78" stroke="#4b7da3" stroke-width="9"/><path d="M94 92l49 91" stroke="#6698bc" stroke-width="9"/><path d="M94 92l49 91M65 165l34-63" stroke="#3c6f96" stroke-width="2"/>
      </svg>
      <!-- Trash -->
      <svg viewBox="0 0 198 213">
        <defs><pattern id="mesh" width="9" height="9" patternUnits="userSpaceOnUse"><path d="M0 0l9 9M9 0L0 9" stroke="#bbb" stroke-width="2"/></pattern></defs>
        <path d="M35 72l13 124q49 18 101 0l14-124z" fill="#222"/><path d="M35 72l13 124q49 18 101 0l14-124z" fill="url(#mesh)"/><ellipse cx="99" cy="69" rx="65" ry="25" fill="#262626" stroke="#d8d8d8" stroke-width="7"/><ellipse cx="99" cy="62" rx="57" ry="16" fill="#555" opacity=".6"/><path d="M47 184q50 22 105 0l-3 17q-49 19-100 0z" fill="#bbb" stroke="#eee" stroke-width="2"/><path d="M50 173q49 20 99 0" stroke="#111" stroke-width="8" opacity=".5" fill="none"/>
      </svg>
    </div>
  </div>
</body>
</html>
```
FILE: styles.css
```css
* {
  box-sizing: border-box;
}

body {
  margin: 0;
  width: 1280px;
  height: 800px;
  overflow: hidden;
  background-color: #fcfcfc;
  font-family: "Liberation Sans", Arial, sans-serif;
}

svg {
  display: block;
  flex-shrink: 0;
}

/* menu bar */
.menubar {
  display: flex;
  align-items: center;
  height: 22px;
  padding-left: 20px;
  border-bottom: 1px solid #000;
  background: linear-gradient(rgba(255, 255, 255, .45), rgba(255, 255, 255, .1) 50%, rgba(0, 0, 0, .2)),
    linear-gradient(90deg, #a1a1a3 0, #9d9da2 250px, #ad9ebb 350px, #bc9fc4 500px, #d3a8d5 800px, #c89acc 1280px);
  font-family: "Noto Sans", sans-serif;
  font-size: 14px;
  line-height: 20px;
  color: #0b0b0b;
  white-space: nowrap;
}

.menus {
  display: flex;
  width: 903px;
  padding-left: 18px;
  letter-spacing: .25px;
}

.menus b {
  letter-spacing: .05px;
}

.m1 { width: 94px; }
.m2 { width: 74px; }
.m3 { width: 116px; letter-spacing: .35px; }
.m4 { width: 52px; }
.m5 { width: 39px; }
.m6 { width: 85px; letter-spacing: .1px; }
.m7 { width: 72px; letter-spacing: .05px; }
.m8 { width: 72px; letter-spacing: .2px; }

.battery {
  width: 43px;
  padding-left: 3px;
  font-size: 12px;
}

.clock {
  width: 88px;
  padding-left: 3px;
  letter-spacing: .45px;
}

/* title bar */
.titlebar {
  display: flex;
  align-items: center;
  height: 22px;
  padding-left: 8px;
  border-bottom: 1px solid #7e8d94;
  border-radius: 6px 6px 0 0;
  background: linear-gradient(#e8e8e8, #cdcdcd);
  font-family: "Noto Sans", sans-serif;
  font-size: 13px;
  color: #505050;
  white-space: nowrap;
}

.lights {
  display: flex;
  gap: 7px;
  width: 418px;
}

.lights i {
  width: 14px;
  height: 14px;
  border: 1px solid #8d8d8d;
  border-radius: 50%;
  background: linear-gradient(#b5b5b5, #eee);
}

.t1 { width: 182px; }
.t2 { width: 122px; letter-spacing: .65px; }
.t3 { width: 78px; letter-spacing: .05px; }
.t4 { letter-spacing: .3px; }

/* tool bar */
.toolbar {
  display: flex;
  align-items: flex-start;
  height: 41px;
  padding: 4px 0 0 160px;
  border: 1px solid #8299a5;
  border-radius: 6px;
  background-color: #c2d3dd;
}

.tools {
  display: flex;
  width: 579px;
  height: 31px;
  border: 1px solid #8299a5;
  border-radius: 5px;
  background: linear-gradient(#d9eaf5 50%, #c1d4df 50%);
  box-shadow: inset 0 0 0 1px #f4f9fb;
}

.tool {
  width: 26px;
  height: 28px;
  fill: none;
}

.tool.active {
  background: linear-gradient(#a7b8c1, #9eb0ba) 2px 1px / 24px 26px no-repeat;
}

.tool-t {
  font: bold 13px "Liberation Serif", serif;
  text-anchor: middle;
  fill: #111;
}

.combo {
  display: flex;
  align-items: center;
  justify-content: space-between;
  height: 21px;
  margin-top: 4px;
  padding: 0 2px;
  border: 1px solid #8299a5;
  border-radius: 5px;
  background-color: #fff;
  box-shadow: 1px 1px #9fb0ba;
  font-size: 11px;
  color: #000;
  white-space: nowrap;
}

.units {
  width: 80px;
  margin-left: 173px;
}

.number {
  width: 85px;
  margin-left: 35px;
}

.number span {
  margin-left: auto;
  padding-right: 4px;
}

.period {
  width: 87px;
  margin-left: 1px;
}

.arrow {
  display: flex;
  align-items: center;
  justify-content: center;
  width: 15px;
  height: 13px;
  background: linear-gradient(#dde9f0, #bccfda);
}

.arrow::after {
  border: 3px solid transparent;
  border-top-color: #000;
  border-bottom: 0;
  content: "";
}

.indicators {
  width: 50px;
  height: 28px;
  margin: 1px 0 0 20px;
  padding: 1px;
  border: 1px solid #8299a5;
  border-radius: 5px;
  background-color: #f6f6f6;
}

/* chart */
.chart {
  position: relative;
  height: 589px;
}

.grid {
  fill: none;
  stroke: #d6d6d6;
  shape-rendering: crispEdges;
}

.axis {
  fill: none;
  stroke: #000;
  shape-rendering: crispEdges;
}

.price {
  fill: none;
  stroke: #000;
  stroke-width: 3.3;
  stroke-linejoin: bevel;
  shape-rendering: crispEdges;
}

.label {
  font-size: 11px;
  fill: #000;
}

.label .strong {
  font-size: 12px;
  font-weight: bold;
}

.years {
  text-anchor: middle;
}

.wave {
  font-size: 17px;
  text-anchor: middle;
  fill: #dd4c68;
}

.wave .big {
  font-size: 24px;
  fill: #dc3453;
}

.wave .small {
  font-size: 14px;
}

.arrows {
  fill: none;
  stroke: #e2483a;
  stroke-width: 3.6;
  filter: drop-shadow(1px 2px 1px rgba(0, 0, 0, .3));
}

.arrows + .label,
marker path {
  stroke: none;
}

/* lies over the plot corner */
.pricetab {
  position: absolute;
  top: 3px;
  left: 2px;
  display: flex;
  align-items: center;
  justify-content: space-between;
  width: 99px;
  height: 18px;
  padding: 0 1px 0 2px;
  border: 1px solid #000;
  background-color: #cbdde7;
  font-size: 11px;
}

/* scroll bar */
.bottombar {
  display: flex;
  align-items: center;
  height: 34px;
  padding: 0 2px 2px 3px;
  border: 1px solid #8299a5;
  border-radius: 6px;
  background-color: #c2d3dd;
}

.ic {
  width: 26px;
  height: 26px;
}

.printer {
  margin: 0 2px;
}

.boxed {
  border: 1px solid #808c93;
  border-top-color: #222;
  border-left-color: #222;
}

.scroll {
  display: flex;
  width: 1075px;
  margin: 0 3px 0 2px;
}

.scroll button {
  width: 16px;
  height: 16px;
  padding: 0;
  border: 1px solid #8299a5;
  border-radius: 4px;
  background: linear-gradient(#e8f2f7, #c5d7e1);
}

.scroll button::after {
  display: block;
  width: 0;
  height: 0;
  margin: 0 auto;
  border: 4px solid transparent;
  content: "";
}

.scroll .left::after {
  border-right-color: #000;
  border-left: 0;
}

.scroll .right::after {
  border-left-color: #000;
  border-right: 0;
}

.track {
  flex: 1;
  border: 1px solid #8299a5;
  border-width: 1px 0;
}

.wrench {
  width: 24px;
}

.zoomfit {
  margin: 0 2px 0 3px;
}

.last {
  margin-left: 2px;
}

.grip {
  align-self: flex-end;
  margin: 0 -2px -2px -7px;
}

/* dock */
.dock {
  position: relative;
  display: flex;
  height: 92px;
  padding-left: 62px;
  overflow: hidden;
  background: radial-gradient(ellipse at 380px 30px, #32103f, transparent 330px),
    linear-gradient(90deg, #0d0718, #1a0a26 30%, #07050d 65%, #040407);
}

/* drawn behind the icons */
.shelf {
  position: absolute;
  top: 0;
  left: 0;
}

.apps,
.places {
  position: relative;
  display: flex;
}

.apps svg,
.places svg {
  width: 66.3px;
  height: 71px;
  -webkit-box-reflect: below 0 linear-gradient(transparent 60%, rgba(0, 0, 0, .32));
}

.places {
  margin-left: 32.8px;
}

.gen {
  font: bold 20px "Liberation Sans", sans-serif;
  fill: #fff;
}

.day {
  font: bold 73px "Liberation Sans", sans-serif;
  fill: #222;
}
```
